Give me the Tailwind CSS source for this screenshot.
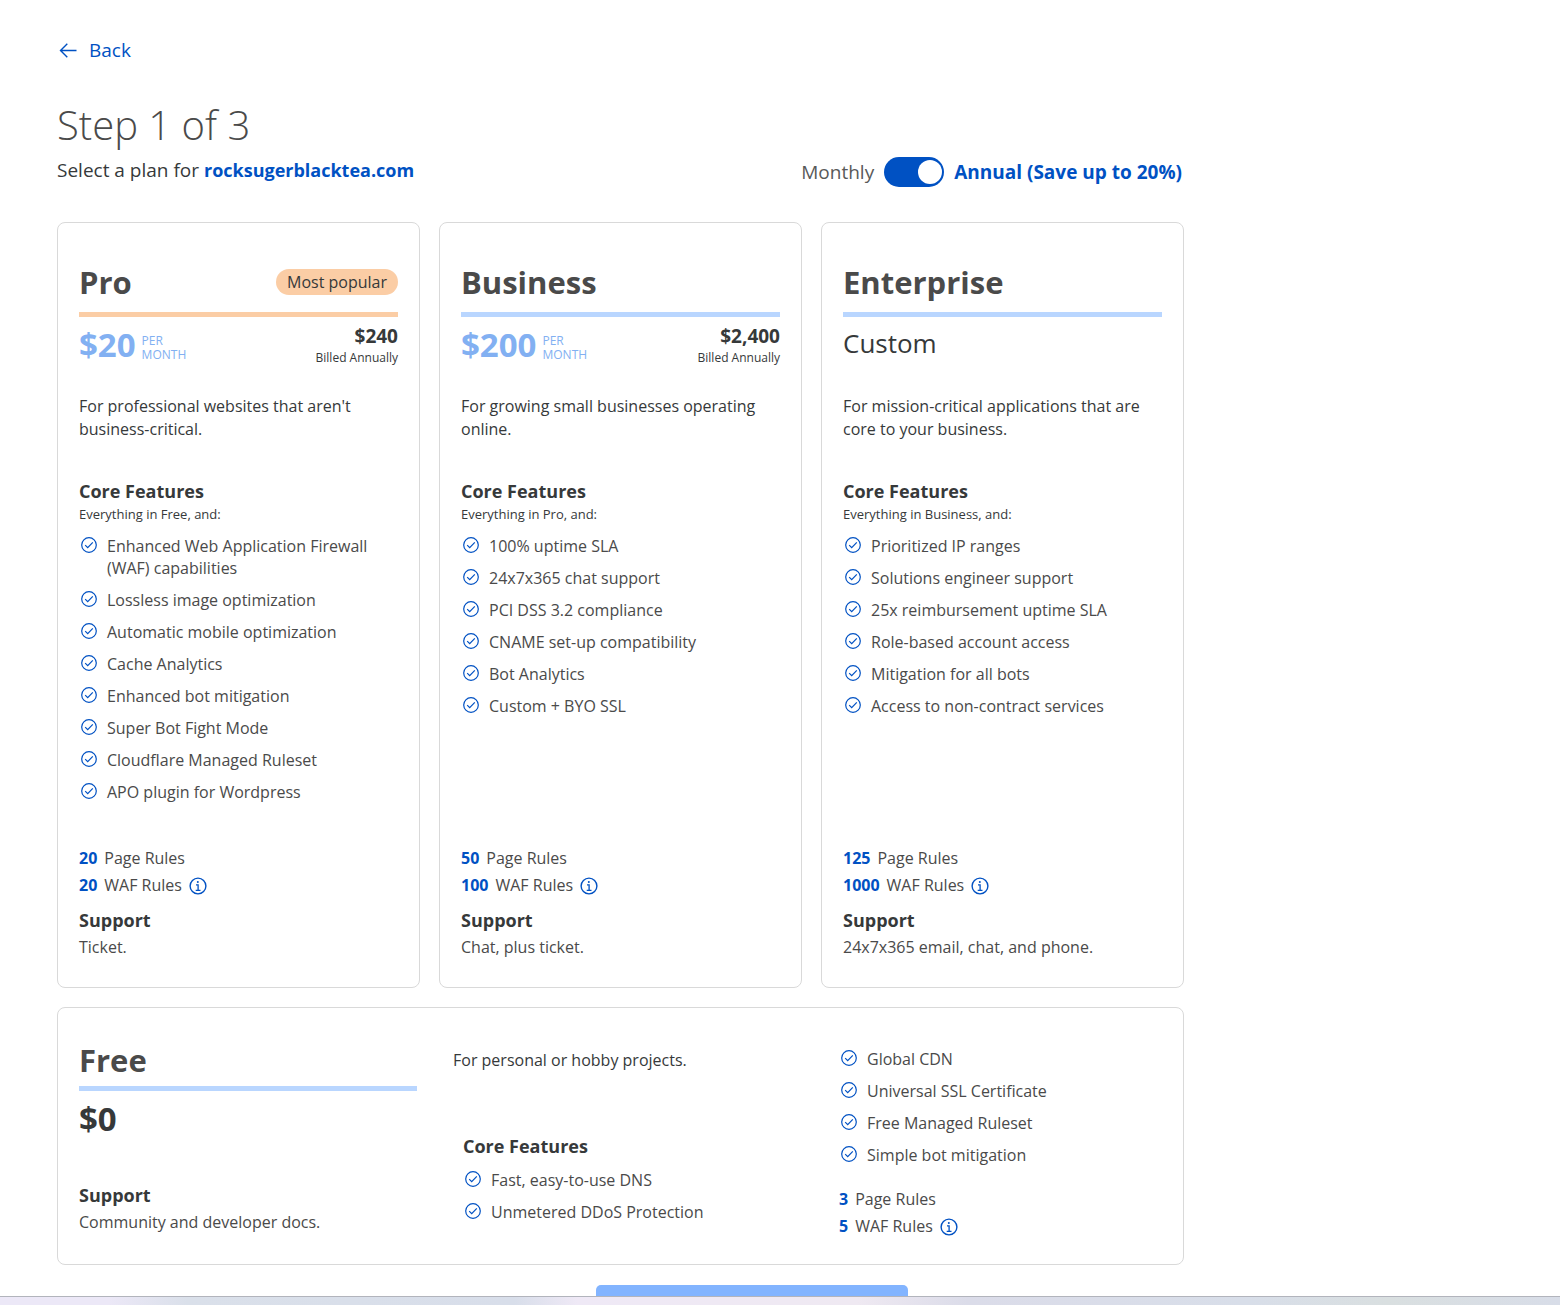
<!DOCTYPE html>
<html lang="en">
<head>
<meta charset="utf-8">
<meta name="viewport" content="width=device-width, initial-scale=1">
<title>Select a plan</title>
<script src="https://cdn.jsdelivr.net/npm/@tailwindcss/browser@4"></script>
</head>
<body class="flex h-screen flex-col bg-white font-['Open_Sans','Noto_Sans',sans-serif] text-base text-[#36393a]">

<svg class="hidden" aria-hidden="true">
  <symbol id="check" viewBox="0 0 16 16">
    <circle cx="8" cy="8" r="7.3" fill="none" stroke="currentColor" stroke-width="1.2"/>
    <path d="M4.2 8.200l2.500 2.500 5.100-5.300" fill="none" stroke="currentColor" stroke-width="1.2"/>
  </symbol>
  <symbol id="info" viewBox="0 0 18 18">
    <circle cx="9" cy="9" r="7.9" fill="none" stroke="currentColor" stroke-width="1.4"/>
    <circle cx="8.800" cy="5.100" r="1" fill="currentColor"/>
    <path d="M7 7.900h2.100v5.300M6.700 13.300h4.800" fill="none" stroke="currentColor" stroke-width="1.3"/>
  </symbol>
</svg>

<main class="min-h-0 flex-1 overflow-y-auto px-[57px] pt-9 [scrollbar-width:none]">
  <div class="max-w-[1127px]">
    <a href="#" class="inline-flex h-7 items-center gap-3 text-[19px] leading-7 text-[#0051c3]">
      <svg class="ml-0.5 size-[18px]" viewBox="0 0 18 18" fill="none" stroke="currentColor" stroke-width="1.4" aria-hidden="true"><path d="M17.500 9.500H1.500M8.300 2.700L1.500 9.500l6.800 6.800"/></svg>
      Back
    </a>

    <header class="mt-[34px] flex items-end justify-between">
      <div class="pb-1">
        <h1 class="text-[40px] leading-[52px] font-light text-[#4a4a4a]">Step 1 of 3</h1>
        <p class="mt-[5px] text-[19px] leading-7">Select a plan for <strong class="text-lg leading-7 font-bold text-[#0051c3]">rocksugerblacktea.com</strong></p>
      </div>
      <div class="flex h-8 items-center gap-2.5 pr-0.5 text-[19px] leading-7">
        <span class="text-[#595959]">Monthly</span>
        <button type="button" role="switch" aria-checked="true" aria-labelledby="annual" class="flex h-[30px] w-[60px] items-center justify-end rounded-full bg-[#0051c3] px-0.5"><span class="size-6 rounded-full bg-white"></span></button>
        <span id="annual" class="font-bold text-[#0051c3]">Annual (Save up to 20%)</span>
      </div>
    </header>

    <div class="mt-[34px] grid grid-cols-3 gap-[19px]">
      <section class="flex flex-col rounded-lg border border-[#d9d9d9] px-[21px] pt-9 pb-[26px]">
        <div class="flex h-[58px] items-center justify-between border-b-5 border-[#fbcda5] pb-2">
          <h2 class="text-[31px] leading-10 font-bold text-[#4a4a4a]">Pro</h2>
          <span class="rounded-full bg-[#fbcda5] px-[11px] leading-[26px]">Most popular</span>
        </div>
        <div class="flex h-14 items-center justify-between">
          <p class="flex items-center gap-1.5 text-[#82b0f2]"><strong class="text-[33px] leading-10 font-bold">$20</strong><span class="pt-1.5 text-xs leading-[14px]">PER<br>MONTH</span></p>
          <p class="pt-1 text-right"><strong class="block text-[19px] leading-[22px] font-bold">$240</strong><span class="block text-xs leading-[22px]">Billed Annually</span></p>
        </div>
        <p class="mt-[22px] h-[46px] leading-[23px]">For professional websites that aren't business-critical.</p>
        <h3 class="mt-[38px] text-lg leading-6 font-bold">Core Features</h3>
        <p class="text-[13px] leading-[22px]">Everything in Free, and:</p>
        <ul class="mt-2.5 flex flex-col gap-2.5 leading-[22px] text-[#4a4a4a]">
          <li class="flex gap-2.5"><svg class="mt-0.5 ml-0.5 size-4 shrink-0 text-[#0051c3]"><use href="#check"/></svg>Enhanced Web Application Firewall (WAF) capabilities</li>
          <li class="flex gap-2.5"><svg class="mt-0.5 ml-0.5 size-4 shrink-0 text-[#0051c3]"><use href="#check"/></svg>Lossless image optimization</li>
          <li class="flex gap-2.5"><svg class="mt-0.5 ml-0.5 size-4 shrink-0 text-[#0051c3]"><use href="#check"/></svg>Automatic mobile optimization</li>
          <li class="flex gap-2.5"><svg class="mt-0.5 ml-0.5 size-4 shrink-0 text-[#0051c3]"><use href="#check"/></svg>Cache Analytics</li>
          <li class="flex gap-2.5"><svg class="mt-0.5 ml-0.5 size-4 shrink-0 text-[#0051c3]"><use href="#check"/></svg>Enhanced bot mitigation</li>
          <li class="flex gap-2.5"><svg class="mt-0.5 ml-0.5 size-4 shrink-0 text-[#0051c3]"><use href="#check"/></svg>Super Bot Fight Mode</li>
          <li class="flex gap-2.5"><svg class="mt-0.5 ml-0.5 size-4 shrink-0 text-[#0051c3]"><use href="#check"/></svg>Cloudflare Managed Ruleset</li>
          <li class="flex gap-2.5"><svg class="mt-0.5 ml-0.5 size-4 shrink-0 text-[#0051c3]"><use href="#check"/></svg>APO plugin for Wordpress</li>
        </ul>
        <div class="mt-auto pt-[42px] leading-[27px] text-[#4a4a4a]">
          <p class="flex items-center gap-[7px]"><strong class="font-bold text-[#0051c3]">20</strong>Page Rules</p>
          <p class="flex items-center gap-[7px]"><strong class="font-bold text-[#0051c3]">20</strong>WAF Rules<button type="button" aria-label="About WAF rules" class="text-[#0051c3]"><svg class="size-[18px]"><use href="#info"/></svg></button></p>
          <h3 class="mt-2 text-lg leading-[27px] font-bold text-[#36393a]">Support</h3>
          <p>Ticket.</p>
        </div>
      </section>

      <section class="flex flex-col rounded-lg border border-[#d9d9d9] px-[21px] pt-9 pb-[26px]">
        <div class="flex h-[58px] items-center justify-between border-b-5 border-[#b9d6ff] pb-2">
          <h2 class="text-[31px] leading-10 font-bold text-[#4a4a4a]">Business</h2>
        </div>
        <div class="flex h-14 items-center justify-between">
          <p class="flex items-center gap-1.5 text-[#82b0f2]"><strong class="text-[33px] leading-10 font-bold">$200</strong><span class="pt-1.5 text-xs leading-[14px]">PER<br>MONTH</span></p>
          <p class="pt-1 text-right"><strong class="block text-[19px] leading-[22px] font-bold">$2,400</strong><span class="block text-xs leading-[22px]">Billed Annually</span></p>
        </div>
        <p class="mt-[22px] h-[46px] leading-[23px]">For growing small businesses operating online.</p>
        <h3 class="mt-[38px] text-lg leading-6 font-bold">Core Features</h3>
        <p class="text-[13px] leading-[22px]">Everything in Pro, and:</p>
        <ul class="mt-2.5 flex flex-col gap-2.5 leading-[22px] text-[#4a4a4a]">
          <li class="flex gap-2.5"><svg class="mt-0.5 ml-0.5 size-4 shrink-0 text-[#0051c3]"><use href="#check"/></svg>100% uptime SLA</li>
          <li class="flex gap-2.5"><svg class="mt-0.5 ml-0.5 size-4 shrink-0 text-[#0051c3]"><use href="#check"/></svg>24x7x365 chat support</li>
          <li class="flex gap-2.5"><svg class="mt-0.5 ml-0.5 size-4 shrink-0 text-[#0051c3]"><use href="#check"/></svg>PCI DSS 3.2 compliance</li>
          <li class="flex gap-2.5"><svg class="mt-0.5 ml-0.5 size-4 shrink-0 text-[#0051c3]"><use href="#check"/></svg>CNAME set-up compatibility</li>
          <li class="flex gap-2.5"><svg class="mt-0.5 ml-0.5 size-4 shrink-0 text-[#0051c3]"><use href="#check"/></svg>Bot Analytics</li>
          <li class="flex gap-2.5"><svg class="mt-0.5 ml-0.5 size-4 shrink-0 text-[#0051c3]"><use href="#check"/></svg>Custom + BYO SSL</li>
        </ul>
        <div class="mt-auto pt-[42px] leading-[27px] text-[#4a4a4a]">
          <p class="flex items-center gap-[7px]"><strong class="font-bold text-[#0051c3]">50</strong>Page Rules</p>
          <p class="flex items-center gap-[7px]"><strong class="font-bold text-[#0051c3]">100</strong>WAF Rules<button type="button" aria-label="About WAF rules" class="text-[#0051c3]"><svg class="size-[18px]"><use href="#info"/></svg></button></p>
          <h3 class="mt-2 text-lg leading-[27px] font-bold text-[#36393a]">Support</h3>
          <p>Chat, plus ticket.</p>
        </div>
      </section>

      <section class="flex flex-col rounded-lg border border-[#d9d9d9] px-[21px] pt-9 pb-[26px]">
        <div class="flex h-[58px] items-center justify-between border-b-5 border-[#b9d6ff] pb-2">
          <h2 class="text-[31px] leading-10 font-bold text-[#4a4a4a]">Enterprise</h2>
        </div>
        <div class="flex h-14 items-center pb-1">
          <p class="text-[26px] leading-10">Custom</p>
        </div>
        <p class="mt-[22px] h-[46px] leading-[23px]">For mission-critical applications that are core to your business.</p>
        <h3 class="mt-[38px] text-lg leading-6 font-bold">Core Features</h3>
        <p class="text-[13px] leading-[22px]">Everything in Business, and:</p>
        <ul class="mt-2.5 flex flex-col gap-2.5 leading-[22px] text-[#4a4a4a]">
          <li class="flex gap-2.5"><svg class="mt-0.5 ml-0.5 size-4 shrink-0 text-[#0051c3]"><use href="#check"/></svg>Prioritized IP ranges</li>
          <li class="flex gap-2.5"><svg class="mt-0.5 ml-0.5 size-4 shrink-0 text-[#0051c3]"><use href="#check"/></svg>Solutions engineer support</li>
          <li class="flex gap-2.5"><svg class="mt-0.5 ml-0.5 size-4 shrink-0 text-[#0051c3]"><use href="#check"/></svg>25x reimbursement uptime SLA</li>
          <li class="flex gap-2.5"><svg class="mt-0.5 ml-0.5 size-4 shrink-0 text-[#0051c3]"><use href="#check"/></svg>Role-based account access</li>
          <li class="flex gap-2.5"><svg class="mt-0.5 ml-0.5 size-4 shrink-0 text-[#0051c3]"><use href="#check"/></svg>Mitigation for all bots</li>
          <li class="flex gap-2.5"><svg class="mt-0.5 ml-0.5 size-4 shrink-0 text-[#0051c3]"><use href="#check"/></svg>Access to non-contract services</li>
        </ul>
        <div class="mt-auto pt-[42px] leading-[27px] text-[#4a4a4a]">
          <p class="flex items-center gap-[7px]"><strong class="font-bold text-[#0051c3]">125</strong>Page Rules</p>
          <p class="flex items-center gap-[7px]"><strong class="font-bold text-[#0051c3]">1000</strong>WAF Rules<button type="button" aria-label="About WAF rules" class="text-[#0051c3]"><svg class="size-[18px]"><use href="#info"/></svg></button></p>
          <h3 class="mt-2 text-lg leading-[27px] font-bold text-[#36393a]">Support</h3>
          <p>24x7x365 email, chat, and phone.</p>
        </div>
      </section>
    </div>

    <section class="mt-[19px] grid grid-cols-[338fr_350fr_323fr] gap-x-9 rounded-lg border border-[#d9d9d9] px-[21px] pt-7 pb-6">
      <div>
        <h2 class="border-b-5 border-[#b9d6ff] pt-1 pb-1.5 text-[31px] leading-10 font-bold text-[#4a4a4a]">Free</h2>
        <p class="mt-[5px] text-[33px] leading-[46px] font-bold">$0</p>
        <h3 class="mt-10 text-lg leading-[27px] font-bold">Support</h3>
        <p class="leading-[26px] text-[#4a4a4a]">Community and developer docs.</p>
      </div>
      <div>
        <p class="pt-[13px] leading-[23px]">For personal or hobby projects.</p>
        <div class="mt-[62px] pl-2.5">
          <h3 class="text-lg leading-6 font-bold">Core Features</h3>
          <ul class="mt-[11px] flex flex-col gap-2.5 leading-[22px] text-[#4a4a4a]">
            <li class="flex gap-2.5"><svg class="mt-0.5 ml-0.5 size-4 shrink-0 text-[#0051c3]"><use href="#check"/></svg>Fast, easy-to-use DNS</li>
            <li class="flex gap-2.5"><svg class="mt-0.5 ml-0.5 size-4 shrink-0 text-[#0051c3]"><use href="#check"/></svg>Unmetered DDoS Protection</li>
          </ul>
        </div>
      </div>
      <div>
        <ul class="mt-3 flex flex-col gap-2.5 leading-[22px] text-[#4a4a4a]">
          <li class="flex gap-2.5"><svg class="mt-0.5 ml-0.5 size-4 shrink-0 text-[#0051c3]"><use href="#check"/></svg>Global CDN</li>
          <li class="flex gap-2.5"><svg class="mt-0.5 ml-0.5 size-4 shrink-0 text-[#0051c3]"><use href="#check"/></svg>Universal SSL Certificate</li>
          <li class="flex gap-2.5"><svg class="mt-0.5 ml-0.5 size-4 shrink-0 text-[#0051c3]"><use href="#check"/></svg>Free Managed Ruleset</li>
          <li class="flex gap-2.5"><svg class="mt-0.5 ml-0.5 size-4 shrink-0 text-[#0051c3]"><use href="#check"/></svg>Simple bot mitigation</li>
        </ul>
        <div class="mt-5 leading-[27px] text-[#4a4a4a]">
          <p class="flex items-center gap-[7px]"><strong class="font-bold text-[#0051c3]">3</strong>Page Rules</p>
          <p class="flex items-center gap-[7px]"><strong class="font-bold text-[#0051c3]">5</strong>WAF Rules<button type="button" aria-label="About WAF rules" class="text-[#0051c3]"><svg class="size-[18px]"><use href="#info"/></svg></button></p>
        </div>
      </div>
    </section>
  </div>

  <div class="mt-5 flex justify-center pr-14 pb-9">
    <button type="button" aria-label="Continue" class="h-11 w-[312px] rounded-[5px] bg-[#82b4ff]"></button>
  </div>
</main>

<footer class="h-[9px] shrink-0 border-t border-[#b2b4bc] bg-[linear-gradient(90deg,#ece8f7_0%,#ece8f7_7%,#dae0ea_12%,#d8deea_33%,#efe9f6_37%,#efe9f2_55%,#dbdce9_62%,#d8dee9_80%,#d9dfe0_89%,#d8dde8_100%)]"></footer>
</body>
</html>
